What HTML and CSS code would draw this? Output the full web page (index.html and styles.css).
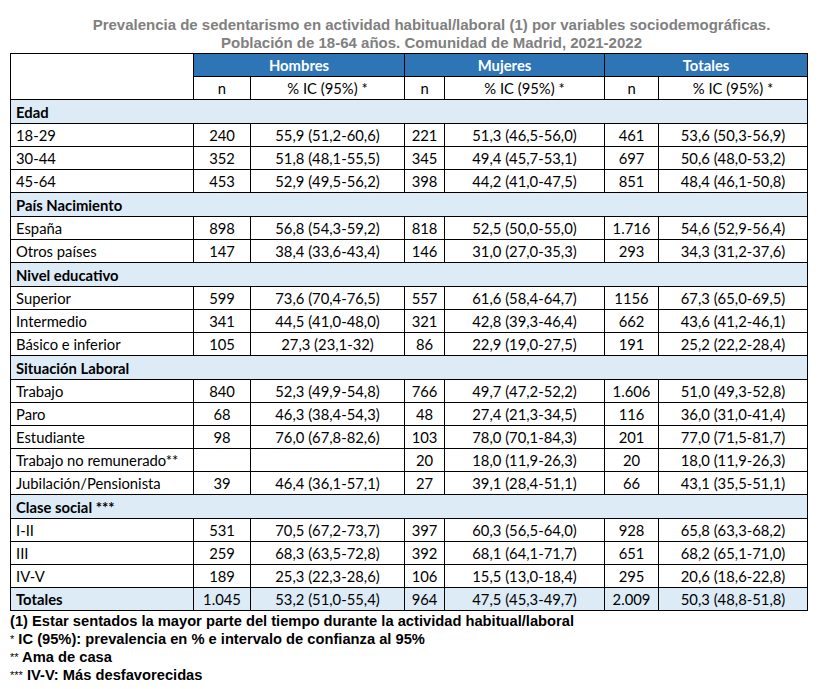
FILE: index.html
```html
<!DOCTYPE html>
<html lang="es">
<head>
<meta charset="utf-8">
<title>Prevalencia de sedentarismo</title>
<link rel="stylesheet" href="styles.css">
</head>
<body>
<div class="page">
  <div class="title">
    <div>Prevalencia de sedentarismo en actividad habitual/laboral (1) por variables sociodemográficas.</div>
    <div>Población de 18-64 años. Comunidad de Madrid, 2021-2022</div>
  </div>
  <table class="data">
    <colgroup>
      <col class="c-label"><col class="c-n1"><col class="c-ic1"><col class="c-n2"><col class="c-ic2"><col class="c-n3"><col class="c-ic3">
    </colgroup>
    <thead>
      <tr class="h1">
        <th rowspan="2" class="blank"></th>
        <th colspan="2" class="grp">Hombres</th>
        <th colspan="2" class="grp">Mujeres</th>
        <th colspan="2" class="grp">Totales</th>
      </tr>
      <tr class="h2">
        <th>n</th><th>% IC (95%) *</th>
        <th>n</th><th>% IC (95%) *</th>
        <th>n</th><th>% IC (95%) *</th>
      </tr>
    </thead>
    <tbody>
      <tr class="sec"><td colspan="7">Edad</td></tr>
      <tr><td>18-29</td><td>240</td><td>55,9 (51,2-60,6)</td><td>221</td><td>51,3 (46,5-56,0)</td><td>461</td><td>53,6 (50,3-56,9)</td></tr>
      <tr><td>30-44</td><td>352</td><td>51,8 (48,1-55,5)</td><td>345</td><td>49,4 (45,7-53,1)</td><td>697</td><td>50,6 (48,0-53,2)</td></tr>
      <tr><td>45-64</td><td>453</td><td>52,9 (49,5-56,2)</td><td>398</td><td>44,2 (41,0-47,5)</td><td>851</td><td>48,4 (46,1-50,8)</td></tr>
      <tr class="sec"><td colspan="7">País Nacimiento</td></tr>
      <tr><td>España</td><td>898</td><td>56,8 (54,3-59,2)</td><td>818</td><td>52,5 (50,0-55,0)</td><td>1.716</td><td>54,6 (52,9-56,4)</td></tr>
      <tr><td>Otros países</td><td>147</td><td>38,4 (33,6-43,4)</td><td>146</td><td>31,0 (27,0-35,3)</td><td>293</td><td>34,3 (31,2-37,6)</td></tr>
      <tr class="sec"><td colspan="7">Nivel educativo</td></tr>
      <tr><td>Superior</td><td>599</td><td>73,6 (70,4-76,5)</td><td>557</td><td>61,6 (58,4-64,7)</td><td>1156</td><td>67,3 (65,0-69,5)</td></tr>
      <tr><td>Intermedio</td><td>341</td><td>44,5 (41,0-48,0)</td><td>321</td><td>42,8 (39,3-46,4)</td><td>662</td><td>43,6 (41,2-46,1)</td></tr>
      <tr><td>Básico e inferior</td><td>105</td><td>27,3 (23,1-32)</td><td>86</td><td>22,9 (19,0-27,5)</td><td>191</td><td>25,2 (22,2-28,4)</td></tr>
      <tr class="sec"><td colspan="7">Situación Laboral</td></tr>
      <tr><td>Trabajo</td><td>840</td><td>52,3 (49,9-54,8)</td><td>766</td><td>49,7 (47,2-52,2)</td><td>1.606</td><td>51,0 (49,3-52,8)</td></tr>
      <tr><td>Paro</td><td>68</td><td>46,3 (38,4-54,3)</td><td>48</td><td>27,4 (21,3-34,5)</td><td>116</td><td>36,0 (31,0-41,4)</td></tr>
      <tr><td>Estudiante</td><td>98</td><td>76,0 (67,8-82,6)</td><td>103</td><td>78,0 (70,1-84,3)</td><td>201</td><td>77,0 (71,5-81,7)</td></tr>
      <tr><td>Trabajo no remunerado**</td><td></td><td></td><td>20</td><td>18,0 (11,9-26,3)</td><td>20</td><td>18,0 (11,9-26,3)</td></tr>
      <tr><td>Jubilación/Pensionista</td><td>39</td><td>46,4 (36,1-57,1)</td><td>27</td><td>39,1 (28,4-51,1)</td><td>66</td><td>43,1 (35,5-51,1)</td></tr>
      <tr class="sec"><td colspan="7">Clase social ***</td></tr>
      <tr><td>I-II</td><td>531</td><td>70,5 (67,2-73,7)</td><td>397</td><td>60,3 (56,5-64,0)</td><td>928</td><td>65,8 (63,3-68,2)</td></tr>
      <tr><td>III</td><td>259</td><td>68,3 (63,5-72,8)</td><td>392</td><td>68,1 (64,1-71,7)</td><td>651</td><td>68,2 (65,1-71,0)</td></tr>
      <tr><td>IV-V</td><td>189</td><td>25,3 (22,3-28,6)</td><td>106</td><td>15,5 (13,0-18,4)</td><td>295</td><td>20,6 (18,6-22,8)</td></tr>
      <tr class="tot"><td>Totales</td><td>1.045</td><td>53,2 (51,0-55,4)</td><td>964</td><td>47,5 (45,3-49,7)</td><td>2.009</td><td>50,3 (48,8-51,8)</td></tr>
    </tbody>
  </table>
  <div class="notes">
    <div>(1) Estar sentados la mayor parte del tiempo durante la actividad habitual/laboral</div>
    <div><span class="ast">*</span> IC (95%): prevalencia en % e intervalo de confianza al 95%</div>
    <div><span class="ast">**</span> Ama de casa</div>
    <div><span class="ast">***</span> IV-V: Más desfavorecidas</div>
  </div>
</div>
</body>
</html>
```
FILE: styles.css
```css
html, body {
  margin: 0;
  padding: 0;
  background: #ffffff;
}
.page {
  padding: 0 14px 0 10px;
}
.title {
  font-family: "Liberation Sans", Arial, sans-serif;
  font-weight: bold;
  font-size: 15px;
  line-height: 18px;
  color: #808080;
  text-align: center;
  padding: 16px 0 1px 46px;
}
.data {
  border-collapse: collapse;
  width: 797px;
  table-layout: fixed;
  font-family: Lato, "Open Sans", sans-serif;
  font-size: 14.8px;
  color: #000;
}
.c-label { width: 183px; }
.c-n1 { width: 57px; }
.c-ic1 { width: 154px; }
.c-n2 { width: 40px; }
.c-ic2 { width: 160px; }
.c-n3 { width: 54px; }
.c-ic3 { width: 149px; }
.data th, .data td {
  border: 1px solid #000;
  height: 22px;
  padding: 0 4px;
  text-align: center;
  white-space: nowrap;
  font-weight: normal;
}
.data td:first-child {
  text-align: left;
  padding-left: 5px;
}
.data th.grp {
  background: #2e75b6;
  color: #fff;
  font-weight: bold;
}
.data tr.sec td {
  background: #ddebf7;
  font-weight: bold;
  height: 23px;
}
.data tr.tot td {
  background: #ddebf7;
}
.data tr.tot td:first-child {
  font-weight: bold;
}
.notes {
  font-family: "Liberation Sans", Arial, sans-serif;
  font-weight: bold;
  font-size: 14.7px;
  line-height: 18px;
  color: #000;
  padding-top: 1px;
}
.ast {
  font-weight: normal;
  font-size: 11px;
  vertical-align: 1px;
}
```
